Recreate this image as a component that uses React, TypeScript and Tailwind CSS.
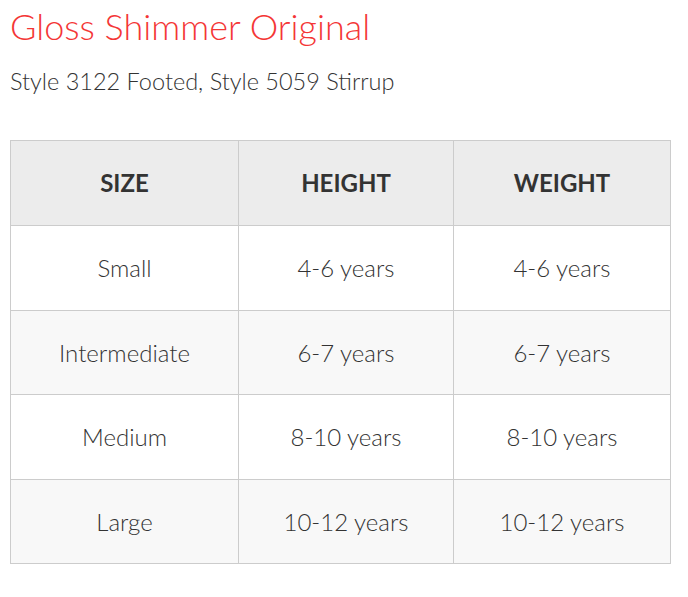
import React from "react";

const rows = [
  ["Small", "4-6 years", "4-6 years"],
  ["Intermediate", "6-7 years", "6-7 years"],
  ["Medium", "8-10 years", "8-10 years"],
  ["Large", "10-12 years", "10-12 years"],
];

export default function App() {
  return (
    <div className="bg-white w-[688px] h-[597px] px-[10px] pt-[4px]" style={{ fontFamily: "Lato, 'Open Sans', sans-serif" }}>
      <h1 className="text-[36px] leading-[44px] font-light text-[#f43636]">Gloss Shimmer Original</h1>
      <p className="mt-[18px] text-[23.5px] leading-[30px] font-light text-[#333]">Style 3122 Footed, Style 5059 Stirrup</p>
      <table className="mt-[44px] w-[660px] border-collapse border border-[#ccc] table-fixed">
        <colgroup>
          <col className="w-[228px]" />
          <col className="w-[215px]" />
          <col className="w-[217px]" />
        </colgroup>
        <thead>
          <tr className="bg-[#ececec] h-[85px]">
            {["SIZE", "HEIGHT", "WEIGHT"].map((h) => (
              <th key={h} className="border border-[#ccc] text-[24px] font-bold text-[#333] text-center align-middle">{h}</th>
            ))}
          </tr>
        </thead>
        <tbody>
          {rows.map((r, i) => (
            <tr key={i} className={(i % 2 === 1 ? "bg-[#f8f8f8] h-[84px]" : "bg-white h-[85px]")}>
              {r.map((c, j) => (
                <td key={j} className="border border-[#ccc] text-[24px] font-light text-[#333] text-center align-middle">{c}</td>
              ))}
            </tr>
          ))}
        </tbody>
      </table>
    </div>
  );
}
